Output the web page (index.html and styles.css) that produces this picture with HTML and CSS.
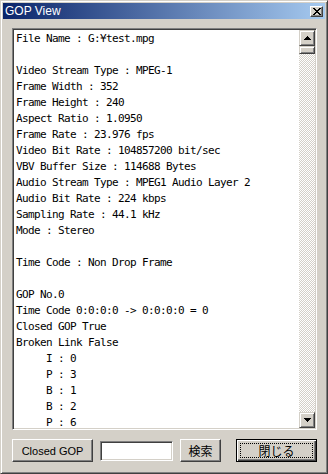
FILE: index.html
```html
<!DOCTYPE html>
<html>
<head>
<meta charset="utf-8">
<link rel="stylesheet" href="styles.css">
</head>
<body>
<div class="window">
  <div class="titlebar">
    <span class="title">GOP View</span>
    <span class="close"><svg width="8" height="7" viewBox="0 0 8 7" shape-rendering="crispEdges"><path d="M0 0h2v1h-2zM6 0h2v1h-2zM1 1h2v1h-2zM5 1h2v1h-2zM2 2h4v1h-4zM3 3h2v1h-2zM2 4h4v1h-4zM1 5h2v1h-2zM5 5h2v1h-2zM0 6h2v1h-2zM6 6h2v1h-2z" fill="#000"/></svg></span>
  </div>
  <div class="content">
    <div class="listbox">
<pre class="text">File Name : G:¥test.mpg

Video Stream Type : MPEG-1
Frame Width : 352
Frame Height : 240
Aspect Ratio : 1.0950
Frame Rate : 23.976 fps
Video Bit Rate : 104857200 bit/sec
VBV Buffer Size : 114688 Bytes
Audio Stream Type : MPEG1 Audio Layer 2
Audio Bit Rate : 224 kbps
Sampling Rate : 44.1 kHz
Mode : Stereo

Time Code : Non Drop Frame

GOP No.0
Time Code 0:0:0:0 -> 0:0:0:0 = 0
Closed GOP True
Broken Link False
     I : 0
     P : 3
     B : 1
     B : 2
     P : 6</pre>
      <div class="scrollbar">
        <div class="sb-btn"><svg width="7" height="4" viewBox="0 0 7 4" shape-rendering="crispEdges"><path d="M3 0h1v1h-1zM2 1h3v1h-3zM1 2h5v1h-5zM0 3h7v1h-7z" fill="#000"/></svg></div>
        <div class="sb-thumb"></div>
        <div class="sb-track"></div>
        <div class="sb-btn"><svg width="7" height="4" viewBox="0 0 7 4" shape-rendering="crispEdges"><path d="M0 0h7v1h-7zM1 1h5v1h-5zM2 2h3v1h-3zM3 3h1v1h-1z" fill="#000"/></svg></div>
      </div>
    </div>
    <div class="buttons">
      <div class="btn btn-wide">Closed GOP</div>
      <div class="edit"></div>
      <div class="btn btn-small cjk">検索</div>
      <div class="btn btn-wide btn-default cjk">閉じる</div>
    </div>
  </div>
</div>
</body>
</html>
```
FILE: styles.css
```css
html, body {
  margin: 0;
  padding: 0;
  background: #D4D0C8;
}

.window {
  width: 328px;
  height: 474px;
  box-sizing: border-box;
  border: 1px solid;
  border-color: #D4D0C8 #404040 #404040 #D4D0C8;
  box-shadow: inset 1px 1px #FFFFFF, inset -1px -1px #808080;
  padding: 2px;
  display: flex;
  flex-direction: column;
  background: #D4D0C8;
}

.titlebar {
  height: 16px;
  flex: none;
  display: flex;
  align-items: center;
  justify-content: space-between;
  padding: 0 2px 0 2px;
  background: linear-gradient(to right, #0A246A, #A6CAF0);
}

.title {
  color: #FFFFFF;
  font-family: "Liberation Sans", Arial, sans-serif;
  font-size: 12px;
  line-height: 16px;
}

.close {
  width: 13px;
  height: 11px;
  box-sizing: border-box;
  border: 1px solid;
  border-color: #FFFFFF #404040 #404040 #FFFFFF;
  box-shadow: inset -1px -1px #808080;
  background: #D4D0C8;
  display: flex;
  align-items: center;
  justify-content: center;
}

.close svg {
  display: block;
}

.content {
  flex: 1;
  min-height: 0;
  display: flex;
  flex-direction: column;
  gap: 9px;
  padding: 9px 8px 9px 9px;
}

.listbox {
  flex: 1;
  min-height: 0;
  display: flex;
  border: 1px solid;
  border-color: #808080 #FFFFFF #FFFFFF #808080;
  box-shadow: inset 1px 1px #404040, inset -1px -1px #D4D0C8;
  padding: 1px;
  background: #FFFFFF;
}

.text {
  flex: 1;
  min-width: 0;
  margin: 0;
  padding: 1px 0 0 2px;
  overflow: hidden;
  white-space: pre;
  font-family: "DejaVu Sans Mono", monospace;
  font-size: 11px;
  letter-spacing: -0.62px;
  line-height: 16px;
  color: #000000;
}

.scrollbar {
  width: 16px;
  flex: none;
  display: flex;
  flex-direction: column;
}

.sb-btn, .sb-thumb {
  box-sizing: border-box;
  border: 1px solid;
  border-color: #D4D0C8 #404040 #404040 #D4D0C8;
  box-shadow: inset 1px 1px #FFFFFF, inset -1px -1px #808080;
  background: #D4D0C8;
}

.sb-btn {
  height: 16px;
  display: flex;
  align-items: center;
  justify-content: center;
}

.sb-btn svg {
  display: block;
}

.sb-thumb {
  height: 8px;
}

.sb-track {
  flex: 1;
  background-color: #D4D0C8;
  background-image: conic-gradient(#FFFFFF 25%, #D4D0C8 0 50%, #FFFFFF 0 75%, #D4D0C8 0);
  background-size: 2px 2px;
}

.buttons {
  height: 23px;
  flex: none;
  display: flex;
  align-items: center;
  gap: 7px;
}

.btn {
  height: 23px;
  box-sizing: border-box;
  border: 1px solid;
  border-color: #FFFFFF #404040 #404040 #FFFFFF;
  box-shadow: inset -1px -1px #808080;
  background: #D4D0C8;
  display: flex;
  align-items: center;
  justify-content: center;
  font-family: "Liberation Sans", Arial, "Noto Sans CJK JP", sans-serif;
  font-size: 11px;
  line-height: 14px;
  color: #000000;
}

.btn-wide {
  width: 81px;
}

.btn-small {
  width: 41px;
}

.cjk {
  font-family: "Noto Sans CJK JP", sans-serif;
  font-size: 12px;
}

.btn-default {
  margin-left: auto;
  border-color: #000000;
  box-shadow: inset 1px 1px #FFFFFF, inset -1px -1px #404040, inset -2px -2px #808080;
  outline: 1px dotted #000000;
  outline-offset: -5px;
}

.edit {
  width: 73px;
  height: 20px;
  box-sizing: border-box;
  border: 1px solid;
  border-color: #808080 #FFFFFF #FFFFFF #808080;
  box-shadow: inset 1px 1px #404040, inset -1px -1px #D4D0C8;
  background: #FFFFFF;
}
```
